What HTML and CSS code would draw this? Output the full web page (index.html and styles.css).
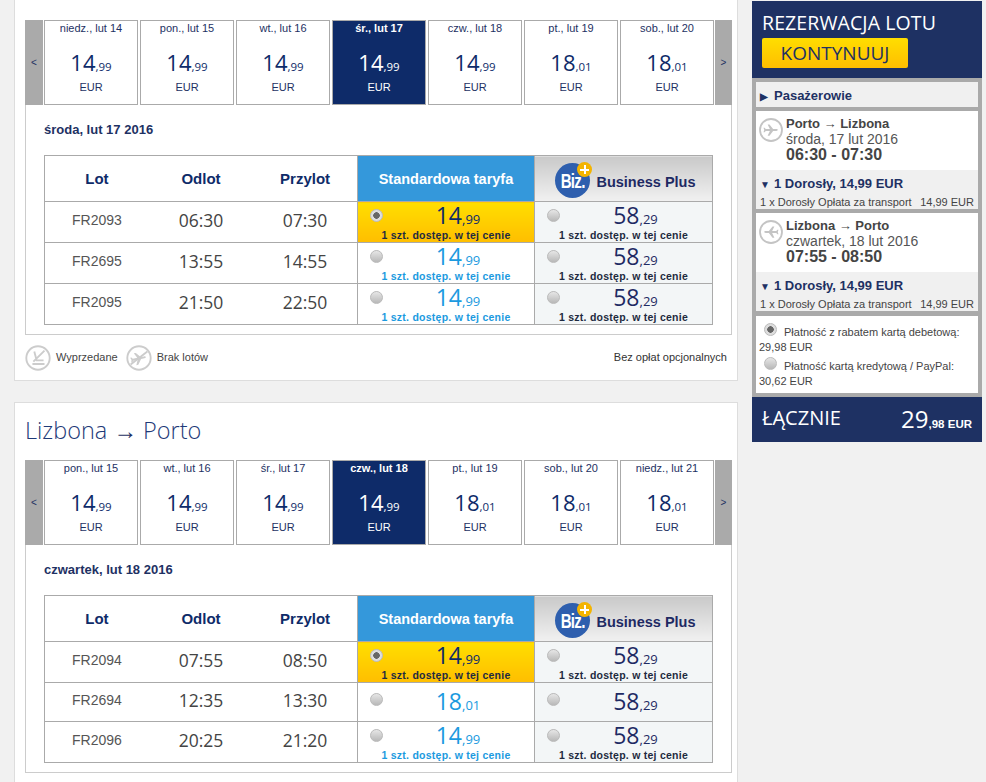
FILE: index.html
```html
<!DOCTYPE html>
<html lang="pl">
<head>
<meta charset="utf-8">
<title>Rezerwacja lotu</title>
<link rel="stylesheet" href="styles.css">
</head>
<body>
<svg class="defs" width="0" height="0" aria-hidden="true">
  <symbol id="plane" viewBox="0 0 24 24">
    <path d="M5 10.8H10.5L7.5 4.5H10L14.8 10.8H19C20.5 10.8 21 11.5 21 12C21 12.5 20.5 13.2 19 13.2H14.8L10 19.5H7.5L10.5 13.2H5L3.5 15H2L3 12L2 9H3.5Z"/>
  </symbol>
</svg>
<div class="page">
  <main class="main">
    <section class="card card-first">
      <div class="strip">
        <div class="arrow">&lt;</div>
        <div class="days">
          <div class="day"><div class="day-name">niedz., lut 14</div><div class="day-price">14<small>,99</small></div><div class="day-cur">EUR</div></div>
          <div class="day"><div class="day-name">pon., lut 15</div><div class="day-price">14<small>,99</small></div><div class="day-cur">EUR</div></div>
          <div class="day"><div class="day-name">wt., lut 16</div><div class="day-price">14<small>,99</small></div><div class="day-cur">EUR</div></div>
          <div class="day day-active"><div class="day-name">śr., lut 17</div><div class="day-price">14<small>,99</small></div><div class="day-cur">EUR</div></div>
          <div class="day"><div class="day-name">czw., lut 18</div><div class="day-price">14<small>,99</small></div><div class="day-cur">EUR</div></div>
          <div class="day"><div class="day-name">pt., lut 19</div><div class="day-price">18<small>,01</small></div><div class="day-cur">EUR</div></div>
          <div class="day"><div class="day-name">sob., lut 20</div><div class="day-price">18<small>,01</small></div><div class="day-cur">EUR</div></div>
        </div>
        <div class="arrow arrow-next">&gt;</div>
      </div>
      <div class="box">
        <h3 class="date-title">środa, lut 17 2016</h3>
        <table class="flights">
          <thead>
            <tr>
              <th class="col">Lot</th><th class="col">Odlot</th><th class="col">Przylot</th>
              <th class="th-std">Standardowa taryfa</th>
              <th class="th-biz"><span class="biz-head"><span class="biz-logo"><span class="biz-text">Biz.</span><span class="biz-plus"></span></span><span class="biz-name">Business Plus</span></span></th>
            </tr>
          </thead>
          <tbody>
            <tr>
              <td class="code">FR2093</td><td class="time">06:30</td><td class="time">07:30</td>
              <td class="fare fare-selected"><span class="radio radio-on"></span><div class="price">14<small>,99</small></div><div class="note">1 szt. dostęp. w tej cenie</div></td>
              <td class="fare fare-biz"><span class="radio"></span><div class="price">58<small>,29</small></div><div class="note">1 szt. dostęp. w tej cenie</div></td>
            </tr>
            <tr>
              <td class="code">FR2695</td><td class="time">13:55</td><td class="time">14:55</td>
              <td class="fare fare-std"><span class="radio"></span><div class="price">14<small>,99</small></div><div class="note">1 szt. dostęp. w tej cenie</div></td>
              <td class="fare fare-biz"><span class="radio"></span><div class="price">58<small>,29</small></div><div class="note">1 szt. dostęp. w tej cenie</div></td>
            </tr>
            <tr>
              <td class="code">FR2095</td><td class="time">21:50</td><td class="time">22:50</td>
              <td class="fare fare-std"><span class="radio"></span><div class="price">14<small>,99</small></div><div class="note">1 szt. dostęp. w tej cenie</div></td>
              <td class="fare fare-biz"><span class="radio"></span><div class="price">58<small>,29</small></div><div class="note">1 szt. dostęp. w tej cenie</div></td>
            </tr>
          </tbody>
        </table>
      </div>
      <div class="legend">
        <div class="legend-items">
          <svg class="legend-icon" viewBox="0 0 28 28"><circle cx="14" cy="14" r="12.6"/><path d="M10 7L12.5 16.5H20M8 20.5H21M21 6L9 18"/></svg>
          <span class="legend-text">Wyprzedane</span>
          <svg class="legend-icon legend-icon-gap" viewBox="0 0 28 28"><circle cx="14" cy="14" r="12.6"/><use href="#plane" x="3" y="4" width="21" height="21" class="legend-plane" transform="rotate(-12 14 14)"/><path d="M5 21L23 7"/></svg>
          <span class="legend-text">Brak lotów</span>
        </div>
        <span class="legend-right">Bez opłat opcjonalnych</span>
      </div>
    </section>

    <section class="card card-second">
      <h2 class="route">Lizbona <span class="route-arrow">→</span> Porto</h2>
      <div class="strip">
        <div class="arrow">&lt;</div>
        <div class="days">
          <div class="day"><div class="day-name">pon., lut 15</div><div class="day-price">14<small>,99</small></div><div class="day-cur">EUR</div></div>
          <div class="day"><div class="day-name">wt., lut 16</div><div class="day-price">14<small>,99</small></div><div class="day-cur">EUR</div></div>
          <div class="day"><div class="day-name">śr., lut 17</div><div class="day-price">14<small>,99</small></div><div class="day-cur">EUR</div></div>
          <div class="day day-active"><div class="day-name">czw., lut 18</div><div class="day-price">14<small>,99</small></div><div class="day-cur">EUR</div></div>
          <div class="day"><div class="day-name">pt., lut 19</div><div class="day-price">18<small>,01</small></div><div class="day-cur">EUR</div></div>
          <div class="day"><div class="day-name">sob., lut 20</div><div class="day-price">18<small>,01</small></div><div class="day-cur">EUR</div></div>
          <div class="day"><div class="day-name">niedz., lut 21</div><div class="day-price">18<small>,01</small></div><div class="day-cur">EUR</div></div>
        </div>
        <div class="arrow arrow-next">&gt;</div>
      </div>
      <div class="box box-second">
        <h3 class="date-title">czwartek, lut 18 2016</h3>
        <table class="flights">
          <thead>
            <tr>
              <th class="col">Lot</th><th class="col">Odlot</th><th class="col">Przylot</th>
              <th class="th-std">Standardowa taryfa</th>
              <th class="th-biz"><span class="biz-head"><span class="biz-logo"><span class="biz-text">Biz.</span><span class="biz-plus"></span></span><span class="biz-name">Business Plus</span></span></th>
            </tr>
          </thead>
          <tbody>
            <tr>
              <td class="code">FR2094</td><td class="time">07:55</td><td class="time">08:50</td>
              <td class="fare fare-selected"><span class="radio radio-on"></span><div class="price">14<small>,99</small></div><div class="note">1 szt. dostęp. w tej cenie</div></td>
              <td class="fare fare-biz"><span class="radio"></span><div class="price">58<small>,29</small></div><div class="note">1 szt. dostęp. w tej cenie</div></td>
            </tr>
            <tr class="row-short">
              <td class="code">FR2694</td><td class="time">12:35</td><td class="time">13:30</td>
              <td class="fare fare-std fare-single"><span class="radio"></span><div class="price">18<small>,01</small></div></td>
              <td class="fare fare-biz fare-single"><span class="radio"></span><div class="price">58<small>,29</small></div></td>
            </tr>
            <tr>
              <td class="code">FR2096</td><td class="time">20:25</td><td class="time">21:20</td>
              <td class="fare fare-std"><span class="radio"></span><div class="price">14<small>,99</small></div><div class="note">1 szt. dostęp. w tej cenie</div></td>
              <td class="fare fare-biz"><span class="radio"></span><div class="price">58<small>,29</small></div><div class="note">1 szt. dostęp. w tej cenie</div></td>
            </tr>
          </tbody>
        </table>
      </div>
    </section>
  </main>

  <aside class="side">
    <div class="side-head">
      <div class="side-title">REZERWACJA LOTU</div>
      <div class="btn">KONTYNUUJ</div>
    </div>
    <div class="side-body">
      <div class="pax"><span class="tri">▶</span>Pasażerowie</div>
      <div class="leg">
        <div class="leg-main">
          <svg class="leg-icon" viewBox="0 0 24 24"><circle cx="12" cy="12" r="11"/><use href="#plane" x="3" y="3" width="18" height="18" class="leg-plane"/></svg>
          <div class="leg-info">
            <div class="leg-route">Porto → Lizbona</div>
            <div class="leg-date">środa, 17 lut 2016</div>
            <div class="leg-time">06:30 - 07:30</div>
          </div>
        </div>
        <div class="leg-foot">
          <div class="leg-pax"><span class="tri tri-down">▼</span>1 Dorosły, 14,99 EUR</div>
          <div class="leg-fee"><span>1 x Dorosły Opłata za transport</span><span>14,99 EUR</span></div>
        </div>
      </div>
      <div class="leg">
        <div class="leg-main">
          <svg class="leg-icon leg-icon-back" viewBox="0 0 24 24"><circle cx="12" cy="12" r="11"/><use href="#plane" x="3" y="3" width="18" height="18" class="leg-plane"/></svg>
          <div class="leg-info">
            <div class="leg-route">Lizbona → Porto</div>
            <div class="leg-date">czwartek, 18 lut 2016</div>
            <div class="leg-time">07:55 - 08:50</div>
          </div>
        </div>
        <div class="leg-foot">
          <div class="leg-pax"><span class="tri tri-down">▼</span>1 Dorosły, 14,99 EUR</div>
          <div class="leg-fee"><span>1 x Dorosły Opłata za transport</span><span>14,99 EUR</span></div>
        </div>
      </div>
      <div class="pay">
        <div class="pay-opt"><span class="radio radio-on radio-inline"></span>Płatność z rabatem kartą debetową:<br>29,98 EUR</div>
        <div class="pay-opt"><span class="radio radio-inline"></span>Płatność kartą kredytową / PayPal:<br>30,62 EUR</div>
      </div>
    </div>
    <div class="total">
      <span class="total-label">ŁĄCZNIE</span>
      <span class="total-val">29<small>,98 EUR</small></span>
    </div>
  </aside>
</div>
</body>
</html>
```

FILE: styles.css
```css
* { box-sizing: border-box; }
html, body { margin: 0; padding: 0; }
body {
  height: 782px;
  overflow: hidden;
  background: #f1f1f1;
  color: #0e2b69;
  font-family: "Liberation Sans", Arial, sans-serif;
}
.defs { position: absolute; }
.page { display: flex; align-items: flex-start; gap: 14px; padding-left: 14px; }
.main { width: 724px; flex: none; display: flex; flex-direction: column; gap: 21px; }

.card { background: #fff; border: 1px solid #ddd; padding: 0 5px 0 10px; }
.card-first { border-top: 0; padding-top: 20px; height: 381px; }
.card-second { height: 400px; }

.route {
  margin: 0;
  height: 57px;
  padding-top: 10px;
  font: 300 23.5px/34px "Open Sans", sans-serif;
  color: #1e3a78;
}
.route-arrow { font-family: "Liberation Sans", sans-serif; font-weight: 700; color: #1e3163; }

.strip { display: flex; height: 85px; }
.arrow {
  width: 18px;
  flex: none;
  background: #aaa;
  display: flex;
  align-items: center;
  justify-content: center;
  font-size: 10px;
  color: #1e3163;
}
.arrow-next { width: 17px; }
.days { display: flex; gap: 2px; margin: 0 1px; }
.day {
  width: 94px;
  height: 85px;
  background: #fff;
  border: 1px solid #aaa;
  text-align: center;
}
.day-name { font-size: 11px; line-height: 14px; height: 24px; color: #1e3163; }
.day-price { font: 22px/30px "Open Sans", sans-serif; height: 30px; margin-top: 2px; }
.day-price small { font-size: 11.5px; }
.day-cur { font-size: 11px; line-height: 14px; margin-top: 3px; color: #1e3163; }
.day-active { background: #0e2b69; border-color: #aaa; color: #fff; }
.day-active .day-name { font-weight: 700; color: #fff; }
.day-active .day-cur { color: #fff; }

.box {
  width: 707px;
  height: 230px;
  border: 1px solid #ccc;
  border-top: 0;
  padding: 0 18px;
}
.box-second { height: 228px; }
.date-title { margin: 0; height: 50px; font-size: 13px; line-height: 50px; font-weight: 700; color: #1e3163; }

.flights {
  width: 669px;
  table-layout: fixed;
  border-collapse: collapse;
}
.flights th, .flights td { border: 1px solid #aaa; padding: 0; text-align: center; }
.flights th { height: 46px; font-size: 15px; font-weight: 700; color: #0e2b69; }
.flights th.col, .flights td.code, .flights td.time { border-left: 0; border-right: 0; }
.flights th.col:first-child, .flights td.code { border-left: 1px solid #aaa; }
.flights th.col { width: 104.33px; }
.flights tbody tr { height: 41px; }
.flights tbody tr.row-short { height: 39px; }
.flights .th-std { width: 177px; background: #3498db; color: #fff; font-size: 14.5px; }
.flights .th-biz { background: linear-gradient(#c9c9c9, #f1f1f1); color: #1e2a63; }
.biz-head { display: flex; align-items: center; justify-content: center; gap: 6px; padding: 4px 0 0 4px; font-size: 14.5px; }
.biz-name { padding-top: 2px; }
.biz-logo { position: relative; width: 35px; height: 35px; flex: none; background: #2e5fae; border-radius: 50%; display: flex; align-items: center; justify-content: center; }
.biz-text { font: 700 21px/24px "Liberation Sans", sans-serif; color: #fff; transform: scaleX(0.72); letter-spacing: -1px; }
.biz-plus {
  position: absolute;
  top: -1px;
  right: -2px;
  width: 15px;
  height: 15px;
  border-radius: 50%;
  background:
    linear-gradient(#fff, #fff) center / 9px 2px no-repeat,
    linear-gradient(#fff, #fff) center / 2px 9px no-repeat,
    #f4b400;
}

.flights td.code { font-size: 14px; color: #555; padding-bottom: 4px; }
.flights td.time { font: 17.5px "Open Sans", sans-serif; color: #444; padding-bottom: 4px; }

.fare { position: relative; vertical-align: top; }
.fare-selected { background: linear-gradient(#ffde00, #ffbe00); color: #0e2b69; }
.fare-std { color: #1b9ae0; }
.fare-biz { background: #f3f6f7; color: #1e2a63; }
.price { font: 23px/26px "Open Sans", sans-serif; height: 27px; padding-left: 24px; }
.price small { font-size: 13px; }
.note { font-size: 10.5px; line-height: 12px; font-weight: 700; letter-spacing: 0.25px; color: #1e2a40; }
.fare-std .note { color: #1b9ae0; }
.fare-single .price { margin-top: 5px; }

.radio {
  position: absolute;
  left: 12px;
  top: 7px;
  width: 13px;
  height: 13px;
  border-radius: 50%;
  background: linear-gradient(#e6e6e6, #b8b8b8);
  border: 1px solid #bbb;
}
.radio-on { background: radial-gradient(circle, #666 0 3px, #ddd 3.5px); }
.fare-single .radio { top: 10px; }
.radio-inline { position: static; display: inline-block; vertical-align: middle; margin: 0 7px 0 5px; transform: translateY(-4px); }

.side { width: 230px; flex: none; margin-top: 1px; }
.side-head { background: #1e3163; height: 77px; padding: 12px 10px 0; }
.side-title { font: 19.5px/20px "Open Sans", sans-serif; color: #fff; letter-spacing: 0.1px; white-space: nowrap; }
.btn {
  margin-top: 5px;
  width: 146px;
  height: 30px;
  border-radius: 2px;
  background: linear-gradient(#ffde00, #ffbe00);
  font: 19px/30px "Open Sans", sans-serif;
  color: #1e3163;
  text-align: center;
}
.side-body { background: #aaa; padding: 4px; display: flex; flex-direction: column; gap: 4px; height: 319px; }
.pax { height: 25px; background: #f0f0f0; font-size: 13px; font-weight: 700; line-height: 28px; padding-left: 4px; color: #1e3163; }
.tri { display: inline-block; width: 14px; font-size: 10px; }
.leg { background: #f0f0f0; height: 98px; }
.leg-main { background: #fff; height: 59px; display: flex; gap: 3px; padding: 5px 0 0 3px; }
.leg-icon { width: 24px; height: 24px; flex: none; margin-top: 2px; fill: none; stroke: #c4c4c4; stroke-width: 1.8; }
.leg-icon-back { transform: scaleX(-1); }
.leg-plane { fill: #c4c4c4; stroke: none; }
.leg-info { color: #444; }
.leg-route { font-size: 13px; line-height: 15px; font-weight: 700; color: #444; }
.leg-date { font-size: 14px; line-height: 16px; color: #555; }
.leg-time { font-size: 16px; line-height: 16px; font-weight: 700; color: #444; }
.leg-foot { padding: 6px 4px 0 4px; }
.leg-pax { font-size: 13px; line-height: 15px; font-weight: 700; color: #1e3163; }
.tri-down { width: 14px; }
.leg-fee { display: flex; justify-content: space-between; font-size: 11px; line-height: 14px; margin-top: 3px; color: #444; white-space: nowrap; }
.pay { background: #fff; height: 78px; margin-top: 1px; padding: 9px 0 0 3px; font-size: 11px; color: #444; }
.pay-opt { margin-bottom: 4px; line-height: 15px; white-space: nowrap; }

.total {
  background: #1e3163;
  height: 45px;
  padding: 0 10px 2px;
  display: flex;
  align-items: center;
  justify-content: space-between;
  color: #fff;
}
.total-label { font: 20px "Open Sans", sans-serif; margin-bottom: 2px; }
.total-val { font: 24px "Open Sans", sans-serif; }
.total-val small { font: 700 11.5px "Liberation Sans", sans-serif; }

.legend { display: flex; align-items: center; justify-content: space-between; width: 702px; height: 28px; margin-top: 9px; }
.legend-items { display: flex; align-items: center; }
.legend-icon { width: 26px; height: 26px; fill: none; stroke: #ccc; stroke-width: 2; }
.legend-icon-gap { margin-left: 8px; }
.legend-plane { fill: #ccc; stroke: none; }
.legend-text { font-size: 11px; margin-left: 5px; padding-bottom: 2px; color: #444; }
.legend-right { font-size: 11px; padding-bottom: 2px; color: #333; }
```
